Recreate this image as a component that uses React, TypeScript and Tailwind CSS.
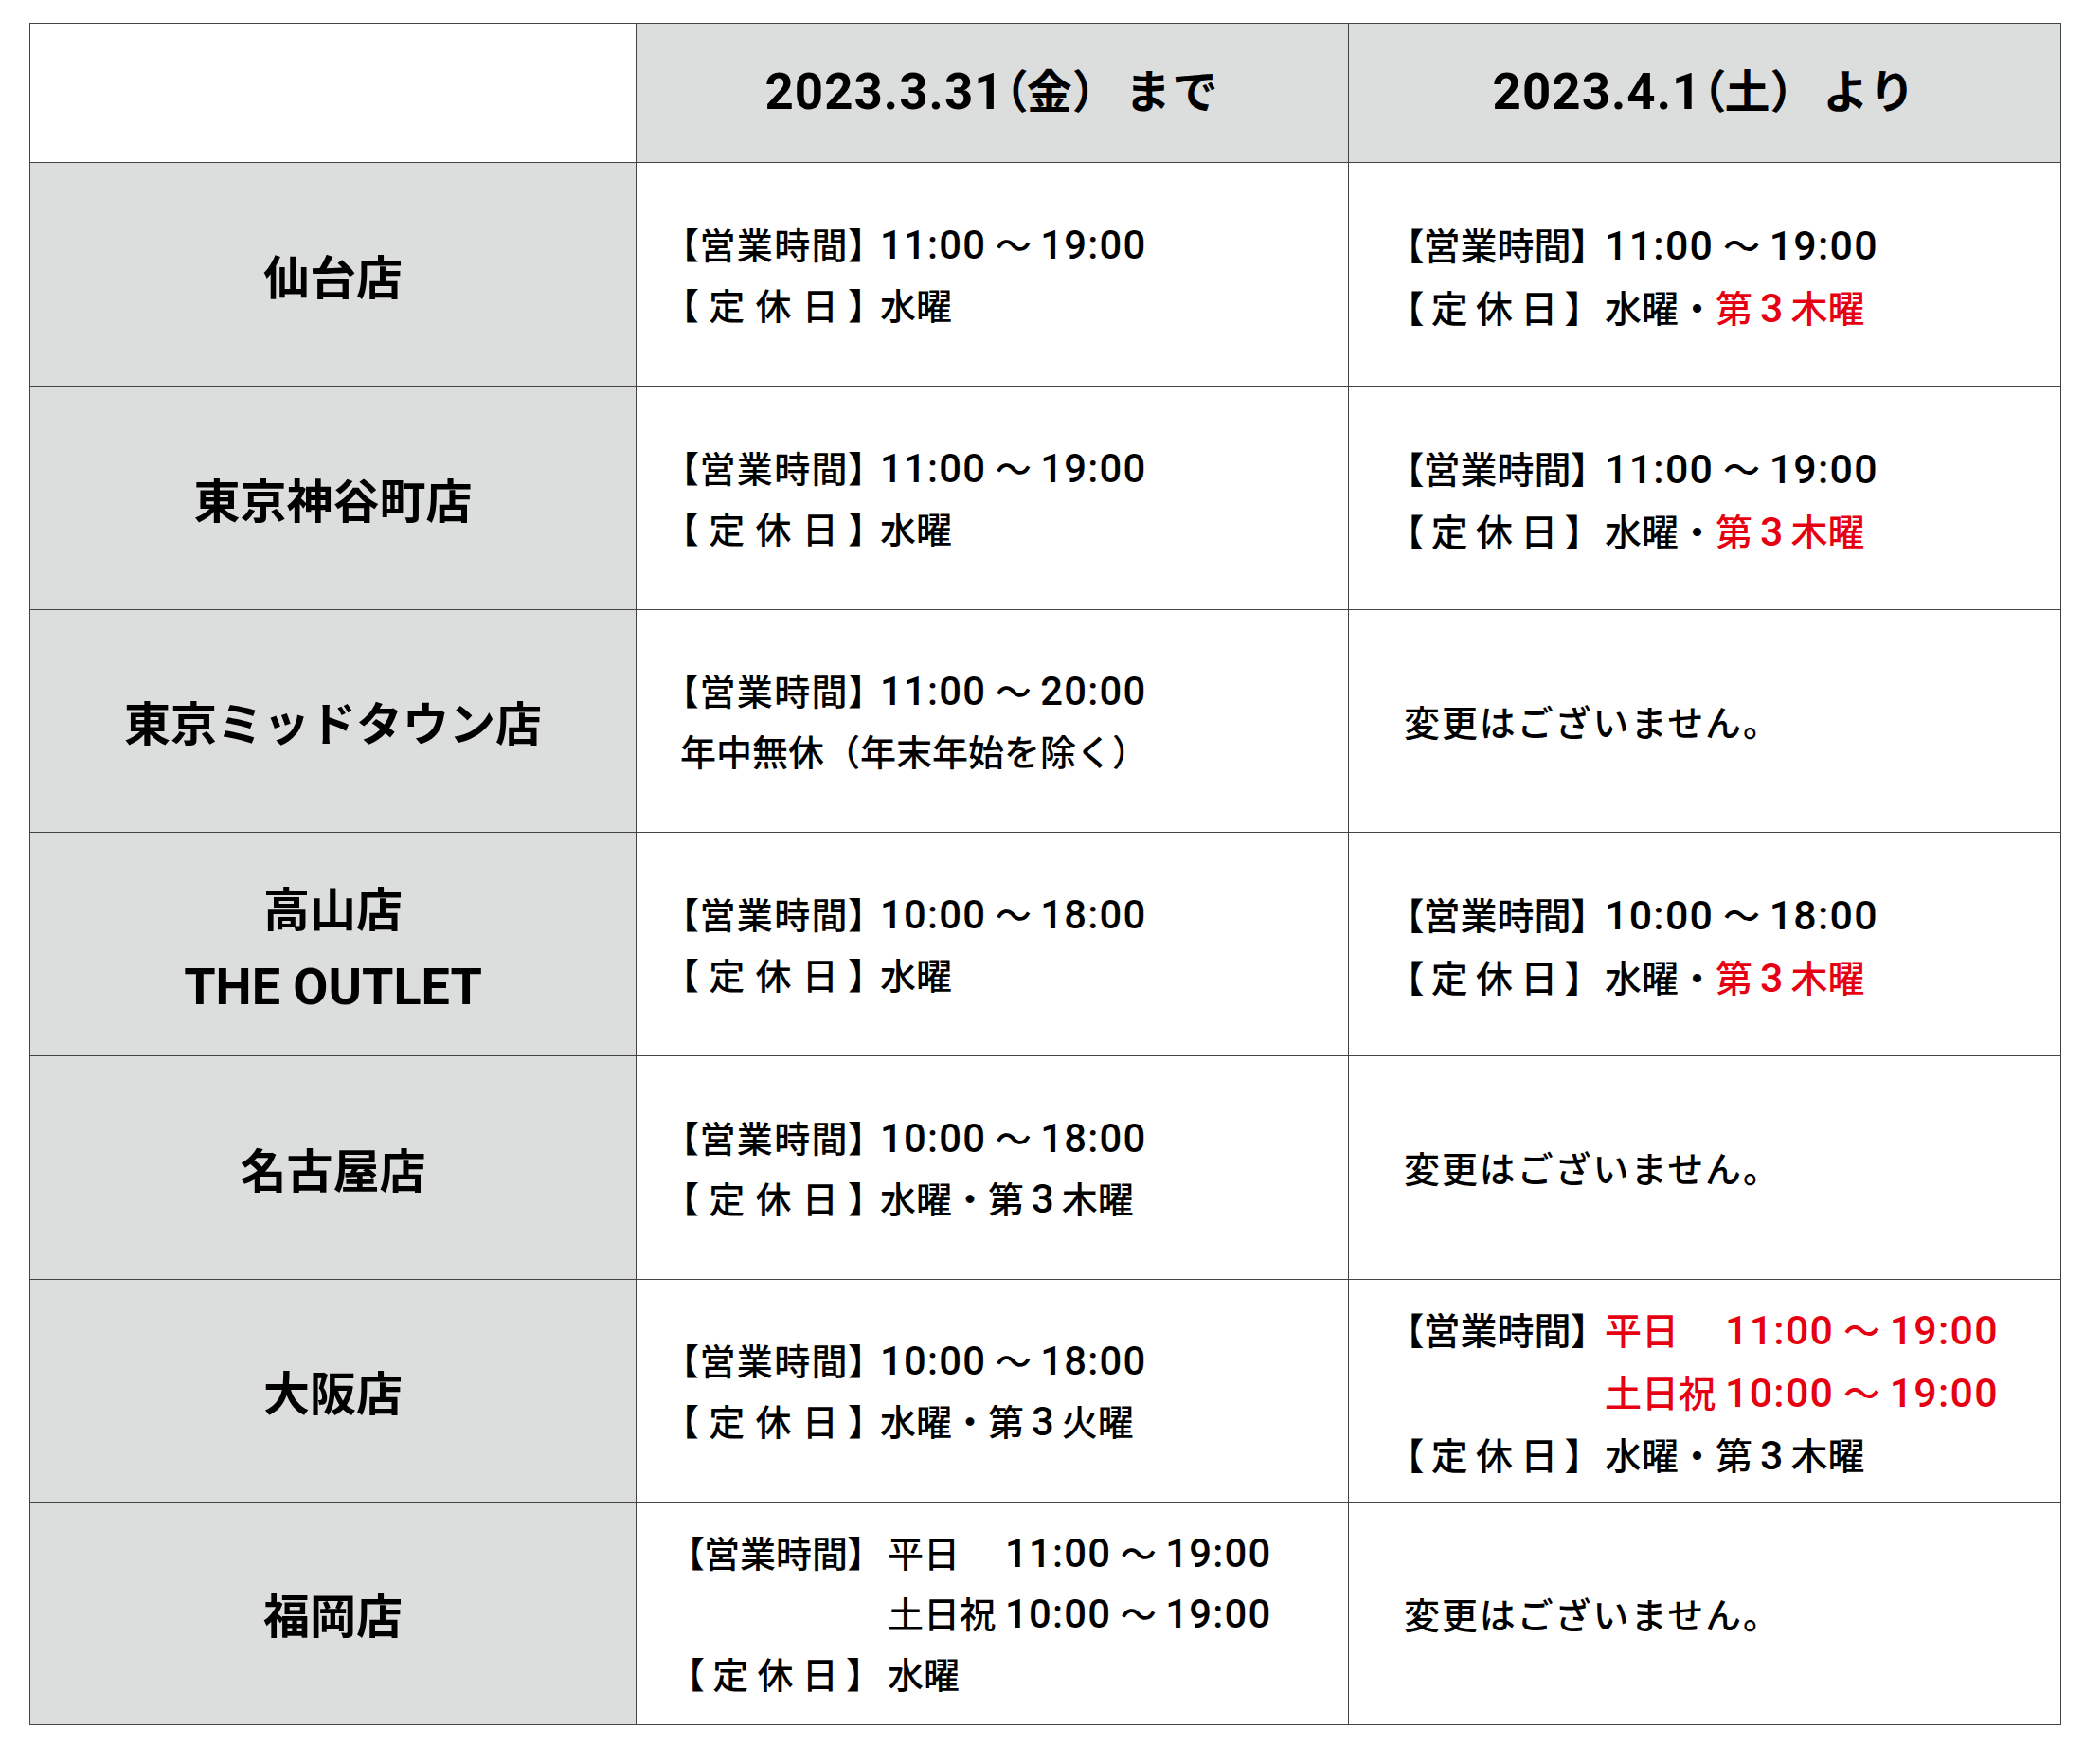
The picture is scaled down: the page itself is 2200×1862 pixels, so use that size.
import type { ReactNode } from 'react';

const RED = 'text-[#e60012]';

// Latin runs (digits, THE OUTLET) are set a little larger than the kanji, like a composite font
function N({ children, className = '' }: { children: ReactNode; className?: string }) {
  return <span className={`text-[1.1em] ${className}`}>{children}</span>;
}

function Time({ from, to }: { from: string; to: string }) {
  return (
    <span className="whitespace-nowrap">
      <N className="leading-none tracking-[0.03em]">{from}</N> 〜{' '}
      <N className="leading-none tracking-[0.03em]">{to}</N>
    </span>
  );
}

function Label({ text, className }: { text: string; className: string }) {
  return (
    <span className={`flex shrink-0 justify-between [font-feature-settings:'palt'] ${className}`}>
      {Array.from(text).map((ch, i) => (
        <span key={i}>{ch}</span>
      ))}
    </span>
  );
}

function Line({ label, lw, children }: { label?: string; lw: string; children: ReactNode }) {
  return (
    <div className="flex items-baseline whitespace-nowrap">
      {label && <Label text={label} className={lw} />}
      <div>{children}</div>
    </div>
  );
}

function Name({ children }: { children: ReactNode }) {
  return (
    <div className="flex flex-col items-center justify-center bg-[#dcdddd] pt-[10px] text-center text-[49px] font-bold leading-[80px]">
      {children}
    </div>
  );
}

function Body({ pad, size, children }: { pad: string; size: string; children: ReactNode }) {
  return (
    <div className={`flex flex-col justify-center bg-white font-medium ${pad} ${size}`}>
      {children}
    </div>
  );
}

// column 2 / column 3 text settings
const S2 = 'text-[38px] leading-[64px] pt-[4px]';
const S3 = 'text-[39px] leading-[66px] pt-[8px]';
const L2 = 'w-[197px] mr-[14px]';
const L3 = 'w-[189px] mr-[22px]';

function Nth({ kanji, red }: { kanji: string; red?: boolean }) {
  return (
    <span className={red ? RED : ''}>
      第<N className="mx-[8px] leading-none">3</N>
      {kanji}
    </span>
  );
}

function NoChange() {
  return (
    <div className="flex items-center bg-white pl-[58px] pt-[6px] text-[38px] font-medium tracking-[0.05em]">
      変更はございません。
    </div>
  );
}

function Split({ red }: { red?: boolean }) {
  return (
    <div className={`grid grid-cols-[auto_auto] gap-x-[10px] ${red ? RED : ''}`}>
      <span>平日</span>
      <Time from="11:00" to="19:00" />
      <span>土日祝</span>
      <Time from="10:00" to="19:00" />
    </div>
  );
}

function Head({ date, day, tail }: { date: string; day: string; tail: string }) {
  return (
    <div className="flex items-center justify-center bg-[#dcdddd] text-[48px] font-bold">
      <N className="tracking-[0.02em]">{date}</N>
      <span className="[font-feature-settings:'palt']">（</span>
      {day}
      <span>）</span>
      <span className="ml-[8px] tracking-[0.04em]">{tail}</span>
    </div>
  );
}

export default function App() {
  return (
    <div className="min-h-screen bg-white pl-[31px] pt-[24px] text-black [font-family:Roboto,'Noto_Sans_CJK_JP',sans-serif]">
      <div className="grid w-max grid-cols-[639px_751px_751px] grid-rows-[146px_235px_235px_234px_235px_235px_234px_234px] gap-px border border-[#444] bg-[#444]">
        {/* header */}
        <div className="bg-white" />
        <Head date="2023.3.31" day="金" tail="まで" />
        <Head date="2023.4.1" day="土" tail="より" />

        {/* 仙台店 */}
        <Name>仙台店</Name>
        <Body pad="pl-[46px]" size={S2}>
          <Line label="【営業時間】" lw={L2}>
            <Time from="11:00" to="19:00" />
          </Line>
          <Line label="【定休日】" lw={L2}>水曜</Line>
        </Body>
        <Body pad="pl-[59px]" size={S3}>
          <Line label="【営業時間】" lw={L3}>
            <Time from="11:00" to="19:00" />
          </Line>
          <Line label="【定休日】" lw={L3}>
            水曜・<Nth kanji="木曜" red />
          </Line>
        </Body>

        {/* 東京神谷町店 */}
        <Name>東京神谷町店</Name>
        <Body pad="pl-[46px]" size={S2}>
          <Line label="【営業時間】" lw={L2}>
            <Time from="11:00" to="19:00" />
          </Line>
          <Line label="【定休日】" lw={L2}>水曜</Line>
        </Body>
        <Body pad="pl-[59px]" size={S3}>
          <Line label="【営業時間】" lw={L3}>
            <Time from="11:00" to="19:00" />
          </Line>
          <Line label="【定休日】" lw={L3}>
            水曜・<Nth kanji="木曜" red />
          </Line>
        </Body>

        {/* 東京ミッドタウン店 */}
        <Name>東京ミッドタウン店</Name>
        <Body pad="pl-[46px]" size={S2}>
          <Line label="【営業時間】" lw={L2}>
            <Time from="11:00" to="20:00" />
          </Line>
          <Line lw={L2}>年中無休（年末年始を除く）</Line>
        </Body>
        <NoChange />

        {/* 高山店 THE OUTLET */}
        <Name>
          <span>高山店</span>
          <N>THE OUTLET</N>
        </Name>
        <Body pad="pl-[46px]" size={S2}>
          <Line label="【営業時間】" lw={L2}>
            <Time from="10:00" to="18:00" />
          </Line>
          <Line label="【定休日】" lw={L2}>水曜</Line>
        </Body>
        <Body pad="pl-[59px]" size={S3}>
          <Line label="【営業時間】" lw={L3}>
            <Time from="10:00" to="18:00" />
          </Line>
          <Line label="【定休日】" lw={L3}>
            水曜・<Nth kanji="木曜" red />
          </Line>
        </Body>

        {/* 名古屋店 */}
        <Name>名古屋店</Name>
        <Body pad="pl-[46px]" size={S2}>
          <Line label="【営業時間】" lw={L2}>
            <Time from="10:00" to="18:00" />
          </Line>
          <Line label="【定休日】" lw={L2}>
            水曜・<Nth kanji="木曜" />
          </Line>
        </Body>
        <NoChange />

        {/* 大阪店 */}
        <Name>大阪店</Name>
        <Body pad="pl-[46px]" size={S2}>
          <Line label="【営業時間】" lw={L2}>
            <Time from="10:00" to="18:00" />
          </Line>
          <Line label="【定休日】" lw={L2}>
            水曜・<Nth kanji="火曜" />
          </Line>
        </Body>
        <Body pad="pl-[59px]" size={S3}>
          <Line label="【営業時間】" lw={L3}>
            <Split red />
          </Line>
          <Line label="【定休日】" lw={L3}>
            水曜・<Nth kanji="木曜" />
          </Line>
        </Body>

        {/* 福岡店 */}
        <Name>福岡店</Name>
        <Body pad="pl-[52px]" size={S2}>
          <Line label="【営業時間】" lw="w-[189px] mr-[24px]">
            <Split />
          </Line>
          <Line label="【定休日】" lw="w-[189px] mr-[24px]">
            水曜
          </Line>
        </Body>
        <NoChange />
      </div>
    </div>
  );
}
